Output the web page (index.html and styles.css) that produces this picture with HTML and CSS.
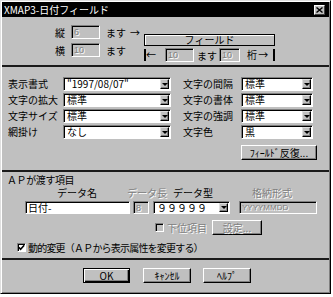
FILE: index.html
```html
<!DOCTYPE html>
<html lang="ja">
<head>
  <meta charset="UTF-8" />
  <title>XMAP3-日付フィールド</title>
  <link rel="stylesheet" href="styles.css">
</head>
<body>
<div class="window">
  <div class="titlebar">
    <span class="title">XMAP3-日付フィールド</span>
    <span class="close">
      <svg width="7" height="6" viewBox="0 0 7 6"><path d="M0.5 0.5 L6.5 5.5 M6.5 0.5 L0.5 5.5" stroke="#000" stroke-width="1.4"/></svg>
    </span>
  </div>

  <div class="pos">
    <div class="pos-left">
      <div class="pos-row">
        <span class="pos-label">縦</span>
        <span class="box num disabled-text w-pos">6</span>
        <span class="unit">ます</span>
        <span class="arrow">→</span>
      </div>
      <div class="pos-row">
        <span class="pos-label">横</span>
        <span class="box num disabled-text w-pos">10</span>
        <span class="unit">ます</span>
      </div>
    </div>
    <div class="pos-right">
      <div class="field-name">フィールド</div>
      <div class="width-row">
        <span class="edge-left">←</span>
        <span class="box num disabled-text w-first">10</span>
        <span class="unit-mid">ます</span>
        <span class="box num disabled-text w-second">10</span>
        <span class="edge-right">桁 →</span>
      </div>
    </div>
  </div>

  <div class="sep"></div>

  <div class="attrs">
    <span class="attr-label">表示書式</span>
    <span class="drop white"><span class="drop-val">"1997/08/07"</span><span class="drop-btn"></span></span>
    <span class="attr-label right">文字の間隔</span>
    <span class="drop white"><span class="drop-val">標準</span><span class="drop-btn"></span></span>

    <span class="attr-label">文字の拡大</span>
    <span class="drop white"><span class="drop-val">標準</span><span class="drop-btn"></span></span>
    <span class="attr-label right">文字の書体</span>
    <span class="drop white"><span class="drop-val">標準</span><span class="drop-btn"></span></span>

    <span class="attr-label">文字サイズ</span>
    <span class="drop white"><span class="drop-val">標準</span><span class="drop-btn"></span></span>
    <span class="attr-label right">文字の強調</span>
    <span class="drop white"><span class="drop-val">標準</span><span class="drop-btn"></span></span>

    <span class="attr-label">網掛け</span>
    <span class="drop white"><span class="drop-val">なし</span><span class="drop-btn"></span></span>
    <span class="attr-label right">文字色</span>
    <span class="drop white"><span class="drop-val">黒</span><span class="drop-btn"></span></span>

    <span class="btn repeat-btn">ﾌｨｰﾙﾄﾞ反復...</span>
  </div>

  <div class="sep"></div>

  <div class="ap">
    <div class="ap-title">ＡＰが渡す項目</div>
    <div class="ap-head">
      <span class="h-name">データ名</span>
      <span class="h-len disabled-text">データ長</span>
      <span class="h-type">データ型</span>
      <span class="h-fmt disabled-text">格納形式</span>
    </div>
    <div class="ap-inputs">
      <span class="box white name-input">日付-</span>
      <span class="box num disabled-text len-input">8</span>
      <span class="drop white type-drop"><span class="drop-val">９９９９９</span><span class="drop-btn"></span></span>
      <span class="box num disabled-text fmt-input">YYYYMMDD</span>
    </div>
    <div class="ap-sub">
      <span class="check sub-check"></span>
      <span class="sub-label disabled-text">下位項目</span>
      <span class="btn set-btn disabled-text">設定...</span>
    </div>
    <div class="ap-dyn">
      <span class="check white dyn-check">
        <svg width="7" height="7" viewBox="0 0 7 7"><path d="M0.8 3.2 L2.6 5.2 L6.2 1.2" fill="none" stroke="#000" stroke-width="1.6"/></svg>
      </span>
      <span class="dyn-label">動的変更（ＡＰから表示属性を変更する）</span>
    </div>
  </div>

  <div class="sep"></div>

  <div class="actions">
    <span class="btn default ok-btn">OK</span>
    <span class="btn cancel-btn">ｷｬﾝｾﾙ</span>
    <span class="btn help-btn">ﾍﾙﾌﾟ</span>
  </div>
</div>
</body>
</html>
```

FILE: styles.css
```css
* {
  box-sizing: border-box;
}

body {
  margin: 0;
  background: #fff;
  font-family: "Noto Sans CJK JP", sans-serif;
  font-size: 10px;
  color: #000;
}

.window {
  width: 331px;
  height: 294px;
  background: #c0c0c0;
  border: 1px solid;
  border-color: #dfdfdf #000 #000 #dfdfdf;
  box-shadow: inset 1px 1px #fff, inset -1px -1px #808080;
  padding: 1px;
}

.titlebar {
  height: 15px;
  background: #000;
  color: #fff;
  display: flex;
  align-items: center;
  justify-content: space-between;
  padding: 0 4px 0 2px;
  font-size: 10px;
  line-height: 15px;
}

.close {
  width: 11px;
  height: 10px;
  background: #c0c0c0;
  border: 1px solid;
  border-color: #fff #404040 #404040 #fff;
  display: flex;
  align-items: center;
  justify-content: center;
}

.close svg {
  display: block;
}

/* common controls */
.box {
  display: inline-flex;
  align-items: center;
  height: 14px;
  border: 1px solid;
  border-color: #808080 #fff #fff #808080;
  box-shadow: inset 1px 1px #000;
  padding: 0 2px;
  line-height: 12px;
  white-space: nowrap;
  overflow: hidden;
}

.white {
  background: #fff;
}

.num {
  font-family: "Liberation Sans", sans-serif;
  font-size: 9px;
}

.disabled-text {
  color: #808080;
  text-shadow: 1px 1px #fff;
}

.drop {
  display: flex;
  align-items: center;
  height: 14px;
  border: 1px solid;
  border-color: #808080 #fff #fff #808080;
  box-shadow: inset 1px 1px #000;
  padding: 0 1px 0 3px;
}

.drop-val {
  flex: 1;
  line-height: 12px;
  white-space: nowrap;
}

.drop-btn {
  width: 9px;
  height: 10px;
  background: #c0c0c0;
  border: 1px solid;
  border-color: #dfdfdf #000 #000 #dfdfdf;
  box-shadow: inset -1px -1px #808080;
  display: flex;
  align-items: center;
  justify-content: center;
}

.drop-btn::after {
  content: "";
  border-top: 3px solid #000;
  border-left: 3px solid transparent;
  border-right: 3px solid transparent;
}

.btn {
  display: flex;
  align-items: center;
  justify-content: center;
  height: 15px;
  background: #c0c0c0;
  border: 1px solid;
  border-color: #fff #000 #000 #fff;
  box-shadow: inset -1px -1px #808080;
  white-space: nowrap;
  line-height: 12px;
}

.btn.default {
  border-color: #000;
  box-shadow: inset 1px 1px #fff, inset -1px -1px #000, inset -2px -2px #808080;
}

.check {
  display: inline-flex;
  align-items: center;
  justify-content: center;
  width: 9px;
  height: 9px;
  border: 1px solid;
  border-color: #808080 #fff #fff #808080;
  box-shadow: inset 1px 1px #000;
}

.sep {
  height: 2px;
  background: #1a1a1a;
}

/* position section */
.pos {
  display: flex;
  height: 48px;
  padding: 8px 0 0 53px;
}

.pos-left {
  width: 89px;
  display: flex;
  flex-direction: column;
  gap: 4px;
}

.pos-row {
  display: flex;
  align-items: center;
  height: 14px;
  white-space: nowrap;
}

.pos-label {
  width: 16px;
}

.w-pos {
  width: 29px;
}

.unit {
  margin-left: 6px;
  width: 24px;
}

.pos-right {
  padding-top: 9px;
}

.field-name {
  width: 131px;
  height: 12px;
  border: 1px solid #000;
  box-shadow: inset 1px 1px #fff;
  text-align: center;
  line-height: 10px;
}

.width-row {
  display: flex;
  align-items: center;
  height: 14px;
  margin-top: 2px;
  white-space: nowrap;
}

.edge-left {
  width: 11px;
  height: 12px;
  border-left: 2px solid #000;
  line-height: 12px;
}

.w-first {
  width: 29px;
  margin-left: 10px;
}

.unit-mid {
  width: 25px;
  padding-left: 3px;
  flex-shrink: 0;
}

.w-second {
  width: 21px;
}

.edge-right {
  width: 35px;
  height: 12px;
  padding-left: 7px;
  border-right: 2px solid #000;
  line-height: 12px;
  letter-spacing: -0.5px;
}

/* attributes grid */
.attrs {
  display: grid;
  grid-template-columns: 55px 108px 70px 72px;
  row-gap: 2px;
  align-items: center;
  padding: 10px 0 10px 6px;
}

.attr-label {
  line-height: 14px;
  white-space: nowrap;
}

.attr-label.right {
  padding-left: 12px;
}

.repeat-btn {
  grid-column: 4;
  width: 76px;
  margin-top: 4px;
}

/* AP section */
.ap {
  padding: 2px 0 5px 5px;
}

.ap-title {
  line-height: 12px;
  letter-spacing: -0.4px;
}

.ap-head {
  display: flex;
  margin-top: 1px;
  line-height: 12px;
  white-space: nowrap;
}

.ap-head span {
  width: 40px;
}

.h-name {
  margin-left: 50px;
}

.h-len {
  margin-left: 30px;
}

.h-type {
  margin-left: 6px;
}

.h-fmt {
  margin-left: 39px;
}

.ap-inputs {
  display: flex;
  margin-top: 2px;
  height: 13px;
}

.ap-inputs .box,
.ap-inputs .drop {
  height: 13px;
}

.name-input {
  width: 105px;
  margin-left: 18px;
}

.len-input {
  width: 16px;
  margin-left: 3px;
}

.type-drop {
  width: 77px;
  margin-left: 4px;
}

.type-drop .drop-btn {
  height: 9px;
}

.fmt-input {
  width: 78px;
  margin-left: 9px;
  font-size: 8px;
}

.ap-sub {
  display: flex;
  align-items: center;
  margin-top: 6px;
  height: 15px;
  white-space: nowrap;
}

.sub-check {
  margin-left: 148px;
}

.sub-label {
  width: 40px;
  margin-left: 3px;
}

.set-btn {
  width: 50px;
  margin-left: 5px;
}

.ap-dyn {
  display: flex;
  align-items: center;
  margin-top: 6px;
  height: 12px;
}

.dyn-check {
  margin-left: 10px;
}

.dyn-label {
  margin-left: 2px;
  white-space: nowrap;
  letter-spacing: -0.8px;
}

/* dialog buttons */
.actions {
  display: flex;
  padding-top: 8px;
}

.ok-btn {
  width: 47px;
  margin-left: 81px;
}

.cancel-btn {
  width: 48px;
  margin-left: 13px;
}

.help-btn {
  width: 48px;
  margin-left: 12px;
}
```
